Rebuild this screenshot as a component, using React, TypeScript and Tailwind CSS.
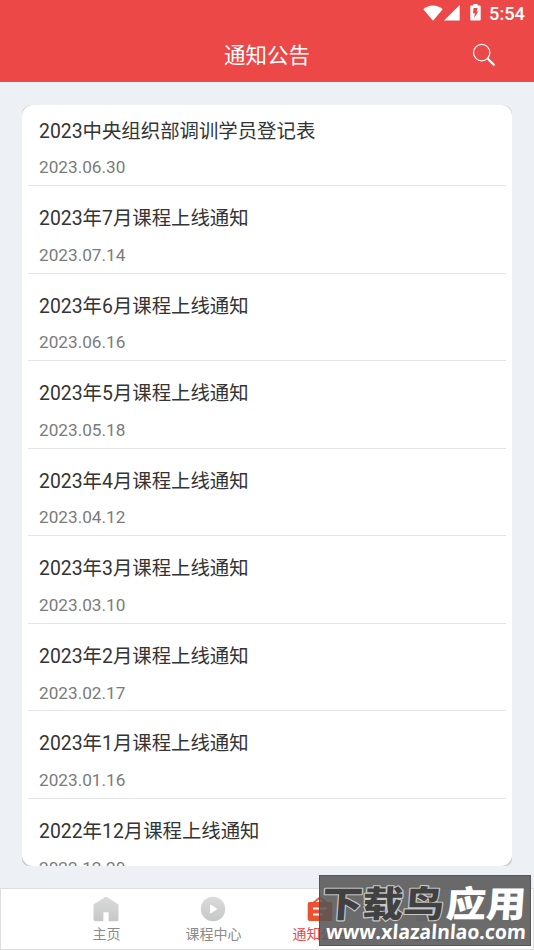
type Notice = {
  title: string;
  date: string;
};

const notices: Notice[] = [
  { title: "2023中央组织部调训学员登记表", date: "2023.06.30" },
  { title: "2023年7月课程上线通知", date: "2023.07.14" },
  { title: "2023年6月课程上线通知", date: "2023.06.16" },
  { title: "2023年5月课程上线通知", date: "2023.05.18" },
  { title: "2023年4月课程上线通知", date: "2023.04.12" },
  { title: "2023年3月课程上线通知", date: "2023.03.10" },
  { title: "2023年2月课程上线通知", date: "2023.02.17" },
  { title: "2023年1月课程上线通知", date: "2023.01.16" },
  { title: "2022年12月课程上线通知", date: "2022.12.20" },
];

function StatusBar() {
  return (
    <div className="flex h-7 items-center justify-end pr-[9px] text-white">
      <svg className="-mt-[2px]" width="20" height="16" viewBox="0 0 20 16" fill="currentColor">
        <path d="M.3 4.2C6 -.8 14-.8 19.7 4.2L10 15.8Z" />
      </svg>
      <svg
        className="-mt-[2px] ml-px"
        width="16"
        height="16"
        viewBox="0 0 16 16"
        fill="currentColor"
      >
        <path d="M15.7 0v15.6H0Z" />
      </svg>
      <svg
        className="-mt-[3px] ml-[10px]"
        width="11"
        height="17"
        viewBox="0 0 11 17"
      >
        <path
          fill="currentColor"
          d="M3.3 0h4.4v1.6h1.8c.7 0 1.2.5 1.2 1.2v12.6c0 .7-.5 1.2-1.2 1.2h-8c-.7 0-1.2-.5-1.2-1.2V2.8c0-.7.5-1.2 1.2-1.2h1.8Z"
        />
        <path fill="#ec4848" d="M3.6 4h4L6.7 7.6h1.6L4.2 14l.7-4.8H3Z" />
      </svg>
      <span className="ml-[8px] text-[18.3px] leading-none font-medium">
        5:54
      </span>
    </div>
  );
}

function Header() {
  return (
    <header className="h-[82px] shrink-0 bg-[#ec4848]">
      <StatusBar />
      <div className="grid h-[54px] grid-cols-[100px_1fr_100px] items-center text-white">
        <h1 className="col-start-2 pt-[2px] text-center text-[21.5px] leading-none">
          通知公告
        </h1>
        <button type="button" aria-label="搜索" className="ml-[38px] w-6">
          <svg
            width="24"
            height="24"
            viewBox="0 0 24 24"
            fill="none"
            stroke="currentColor"
          >
            <circle cx="9.7" cy="9.6" r="8.2" strokeWidth="1.2" />
            <path d="m15.8 15.7 6 6" strokeWidth="2.2" strokeLinecap="round" />
          </svg>
        </button>
      </div>
    </header>
  );
}

function NoticeRow({ title, date }: Notice) {
  return (
    <li className="h-[87.57px] shrink-0 border-b-[1.5px] border-[#e3e4e4] pl-[11px]">
      <p className="pt-[19px] text-[19.4px] leading-[28px] text-[#343434]">
        {title}
      </p>
      <p className="pt-[11.7px] text-[17.2px] leading-[20px] text-[#7b7b7b]">
        {date}
      </p>
    </li>
  );
}

function TabBar() {
  return (
    <nav className="flex h-[62px] shrink-0 border border-[#dedede] bg-white px-[52px] text-[14px] leading-[20px] text-[#8b8b8b]">
      <div className="flex flex-1 flex-col items-center pt-[7px]">
        <svg className="-ml-px" width="26" height="26" viewBox="0 0 26 26">
          <defs>
            <linearGradient id="grey" x1="0" y1="0" x2="0" y2="1">
              <stop offset="0" stopColor="#dadbda" />
              <stop offset="1" stopColor="#c6c8c7" />
            </linearGradient>
          </defs>
          <path
            fill="url(#grey)"
            d="M12 1q1-.7 2 0l10.8 7q.7.5.7 1.3v13.9q0 2-2 2H15.600v-9h-5.200v9H2.500q-2 0-2-2V9.300q0-.8.7-1.300Z"
          />
        </svg>
        <span className="mt-[2px]">主页</span>
      </div>
      <div className="flex flex-1 flex-col items-center pt-[7px]">
        <svg className="-ml-px" width="26" height="26" viewBox="0 0 26 26">
          <circle cx="13" cy="13" r="12.200" fill="url(#grey)" />
          <path d="M10 9.800q0-1.600 1.400-.7l5 3.200q1 .7 0 1.400l-5 3.200Q10 17.800 10 16.200Z" fill="#fff" />
        </svg>
        <span className="mt-[2px]">课程中心</span>
      </div>
      <div className="flex flex-1 flex-col items-center pt-[7px] text-[#ec4848]">
        <svg className="-ml-[2px]" width="26" height="26" viewBox="0 0 26 26">
          <path d="m6 7 7-5.500L20 7" fill="none" stroke="#ef5a38" strokeWidth="1.800" />
          <rect x=".7" y="6" width="24.600" height="19" rx="2" fill="#ee5032" />
          <path d="M6 12.500h14M6 18.500h10" stroke="#fff" strokeWidth="1.800" />
        </svg>
        <span className="mt-[2px]">通知公告</span>
      </div>
      <div className="flex flex-1 flex-col items-center pt-[7px]">
        <svg className="-ml-px" width="26" height="26" viewBox="0 0 26 26" fill="url(#grey)">
          <circle cx="13" cy="7" r="6" />
          <path d="M1 25q1-10 12-10t12 10Z" />
        </svg>
        <span className="mt-[2px]">我的</span>
      </div>
    </nav>
  );
}

function SiteStamp() {
  return (
    <div className="absolute right-[3px] bottom-[4px] h-[71px] w-[212px] border border-[#555] bg-[#555]/87 font-['Noto_Sans_CJK_SC',sans-serif]">
      <svg className="overflow-visible" width="210" height="69" viewBox="0 0 210 69">
        <g
          transform="skewX(-4)"
          fontSize="36"
          fontWeight="900"
          strokeLinejoin="round"
          paintOrder="stroke"
        >
          <text
            x="4"
            y="40.500"
            textLength="122"
            lengthAdjust="spacingAndGlyphs"
            fill="#414141"
            stroke="#c8c8c8"
            strokeWidth="2.200"
          >
            下载鸟
          </text>
          <text
            x="128"
            y="40.500"
            textLength="80"
            lengthAdjust="spacingAndGlyphs"
            fill="#fff"
          >
            应用
          </text>
        </g>
        <text
          x="10"
          y="63"
          transform="skewX(-4)"
          textLength="200"
          lengthAdjust="spacingAndGlyphs"
          fill="#fff"
          fontFamily="Open Sans, sans-serif"
          fontSize="20"
          fontWeight="700"
        >
          www.xlazalnlao.com
        </text>
      </svg>
    </div>
  );
}

export default function App() {
  return (
    <div className="relative flex h-[950px] w-[534px] flex-col overflow-hidden bg-[#edf0f5] font-[Roboto,'Noto_Sans_CJK_SC',sans-serif]">
      <Header />
      <main className="min-h-0 flex-1 px-[22px] pt-[22.500px] pb-[22px]">
        <div className="h-full rounded-t-[9px] rounded-b-[7px] bg-[#c9cacc]">
          <div className="h-full overflow-hidden rounded-[11px] bg-white">
            <ul className="mx-[6px] -mt-[6px] flex flex-col">
              {notices.map((n) => (
                <NoticeRow key={n.title} {...n} />
              ))}
            </ul>
          </div>
        </div>
      </main>
      <TabBar />
      <SiteStamp />
    </div>
  );
}
